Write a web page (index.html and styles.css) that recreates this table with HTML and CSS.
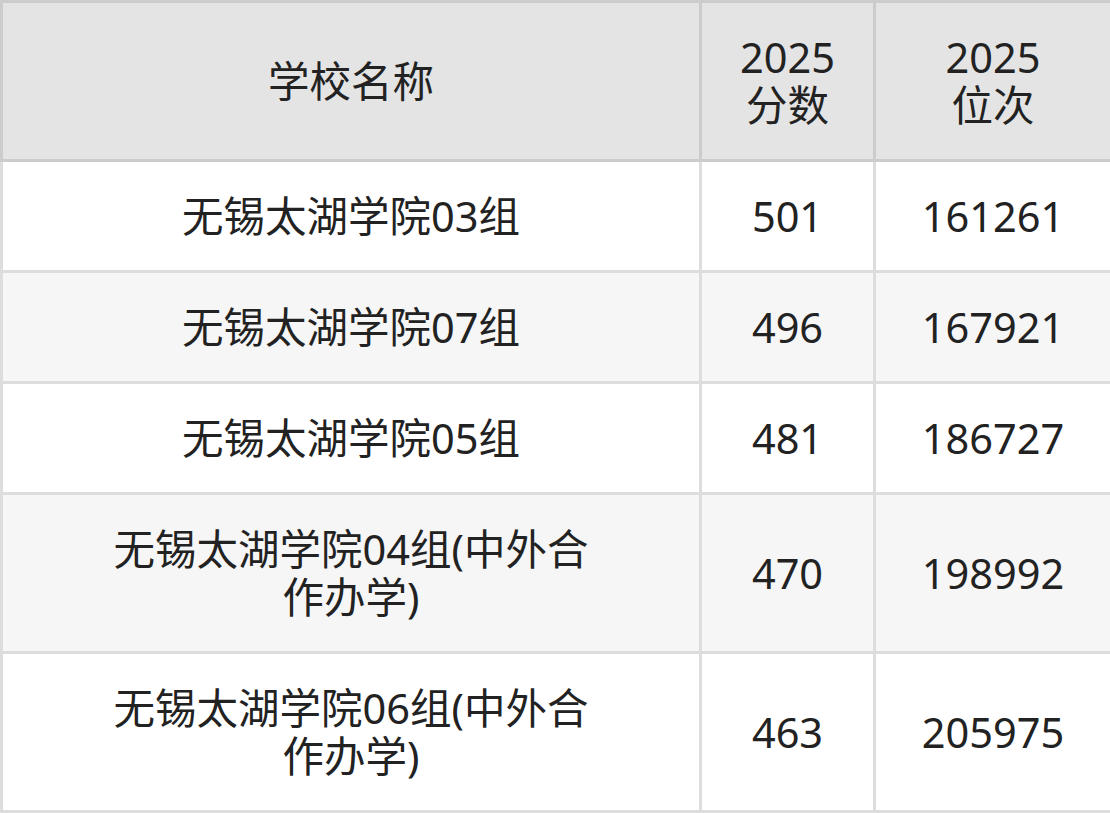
FILE: index.html
```html
<!DOCTYPE html>
<html lang="zh">
<head>
<meta charset="utf-8">
<link rel="stylesheet" href="styles.css">
</head>
<body>
<table class="score-table">
  <colgroup>
    <col class="col-name">
    <col class="col-score">
    <col class="col-rank">
  </colgroup>
  <thead>
    <tr>
      <th class="name">学校名称</th>
      <th>2025<br>分数</th>
      <th>2025<br>位次</th>
    </tr>
  </thead>
  <tbody>
    <tr><td class="name">无锡太湖学院03组</td><td>501</td><td>161261</td></tr>
    <tr><td class="name">无锡太湖学院07组</td><td>496</td><td>167921</td></tr>
    <tr><td class="name">无锡太湖学院05组</td><td>481</td><td>186727</td></tr>
    <tr><td class="name">无锡太湖学院04组(中外合作办学)</td><td>470</td><td>198992</td></tr>
    <tr><td class="name">无锡太湖学院06组(中外合作办学)</td><td>463</td><td>205975</td></tr>
  </tbody>
</table>
</body>
</html>
```
FILE: styles.css
```css
html, body {
  margin: 0;
  padding: 0;
  background: #ffffff;
}

.score-table {
  width: 1110px;
  border-collapse: collapse;
  table-layout: fixed;
  font-family: "Noto Sans", "Noto Sans CJK SC", sans-serif;
  font-size: 41.5px;
  line-height: 48px;
  color: #222222;
}

.col-name { width: 699px; }
.col-score { width: 174px; }
.col-rank { width: 237px; }

.score-table th,
.score-table td {
  border: 3px solid #dddddd;
  padding: 30px 8px;
  text-align: center;
  vertical-align: middle;
  font-weight: 400;
}

.score-table th {
  background: #e4e4e4;
  border-color: #cccccc;
  padding-top: 30px;
  padding-bottom: 30px;
}

.score-table .name {
  padding-left: 95px;
  padding-right: 95px;
}

.score-table tbody tr:nth-child(odd) td {
  background: #ffffff;
}

.score-table tbody tr:nth-child(even) td {
  background: #f6f6f6;
}
```
